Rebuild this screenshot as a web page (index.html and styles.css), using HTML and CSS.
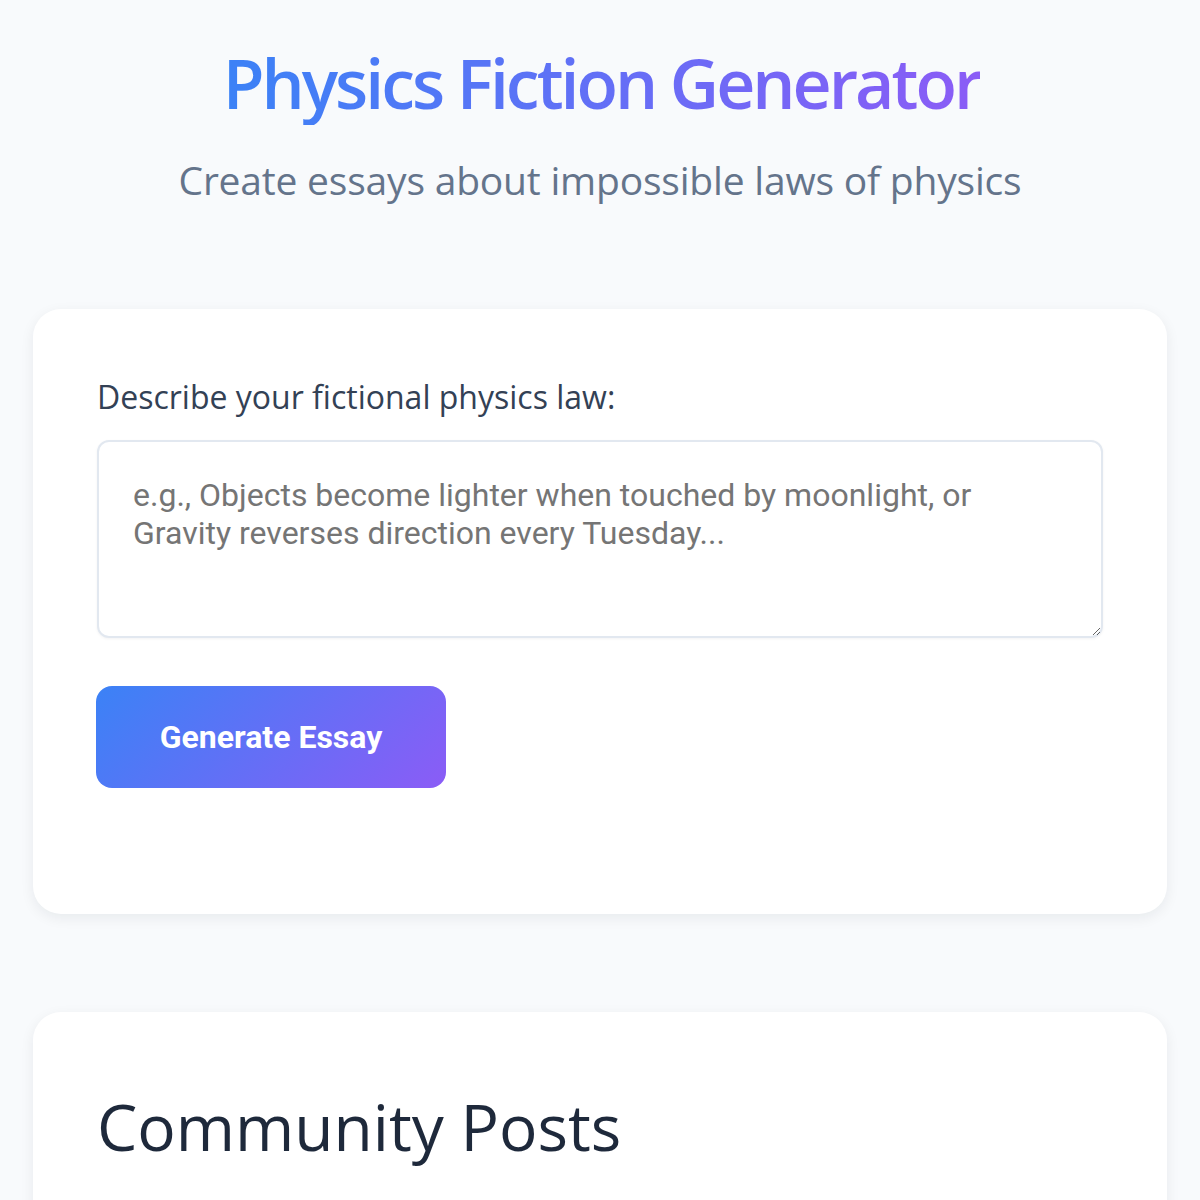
FILE: index.html
```html
<!DOCTYPE html>
<html lang="en">
<head>
<meta charset="utf-8">
<title>Physics Fiction Generator</title>
<link rel="stylesheet" href="styles.css">
</head>
<body>
<div class="page">
  <header class="hero">
    <h1 class="title">Physics Fiction Generator</h1>
    <p class="subtitle">Create essays about impossible laws of physics</p>
  </header>

  <section class="card form-card">
    <label class="label" for="law">Describe your fictional physics law:</label>
    <textarea id="law" class="input" placeholder="e.g., Objects become lighter when touched by moonlight, or Gravity reverses direction every Tuesday..."></textarea>
    <button class="btn" type="button">Generate Essay</button>
  </section>

  <section class="card posts-card">
    <h2 class="posts-title">Community Posts</h2>
  </section>
</div>
</body>
</html>
```

FILE: styles.css
```css
* { box-sizing: border-box; }
html, body { margin: 0; padding: 0; }
body {
  background: #f8fafc;
  font-family: "Open Sans", "Noto Sans", sans-serif;
  color: #1e293b;
}
.page {
  padding: 0 33px 40px;
}
.hero {
  text-align: center;
  padding-top: 41px;
}
.title {
  margin: 0;
  font-size: 68px;
  font-weight: 600;
  letter-spacing: -3px;
  line-height: 84px;
  background: linear-gradient(90deg, #3b82f6, #8b5cf6);
  -webkit-background-clip: text;
  background-clip: text;
  color: transparent;
  display: inline-block;
  padding-left: 3px;
}
.subtitle {
  margin: 29px 0 0;
  font-size: 39px;
  letter-spacing: -0.2px;
  color: #64748b;
  line-height: 51px;
}
.card {
  background: #ffffff;
  border-radius: 28px;
  box-shadow: 0 4px 14px rgba(15, 23, 42, 0.07);
}
.form-card {
  margin-top: 104px;
  padding: 64px 64px 126px;
  display: flex;
  flex-direction: column;
  align-items: flex-start;
}
.label {
  font-size: 32px;
  color: #334155;
  line-height: 48px;
  margin-bottom: 19px;
}
.input {
  width: 100%;
  height: 198px;
  padding: 34px 34px 30px;
  border: 2px solid #e2e8f0;
  border-radius: 12px;
  font-family: Roboto, sans-serif;
  font-size: 32px;
  line-height: 38px;
  color: #1e293b;
  resize: vertical;
  box-shadow: 0 1px 3px rgba(15, 23, 42, 0.05);
}
.input::placeholder { color: #757575; }
.btn {
  margin-top: 48px;
  margin-left: -1px;
  width: 350px;
  height: 102px;
  border: none;
  border-radius: 16px;
  background: linear-gradient(135deg, #3b82f6, #8b5cf6);
  color: #ffffff;
  font-family: Roboto, sans-serif;
  font-weight: 700;
  font-size: 32px;
  cursor: pointer;
}
.posts-card {
  margin-top: 98px;
  padding: 64px;
  min-height: 400px;
}
.posts-title {
  margin: 13px 0 0;
  font-size: 64px;
  font-weight: 400;
  line-height: 1.2;
  color: #1e293b;
}
```
